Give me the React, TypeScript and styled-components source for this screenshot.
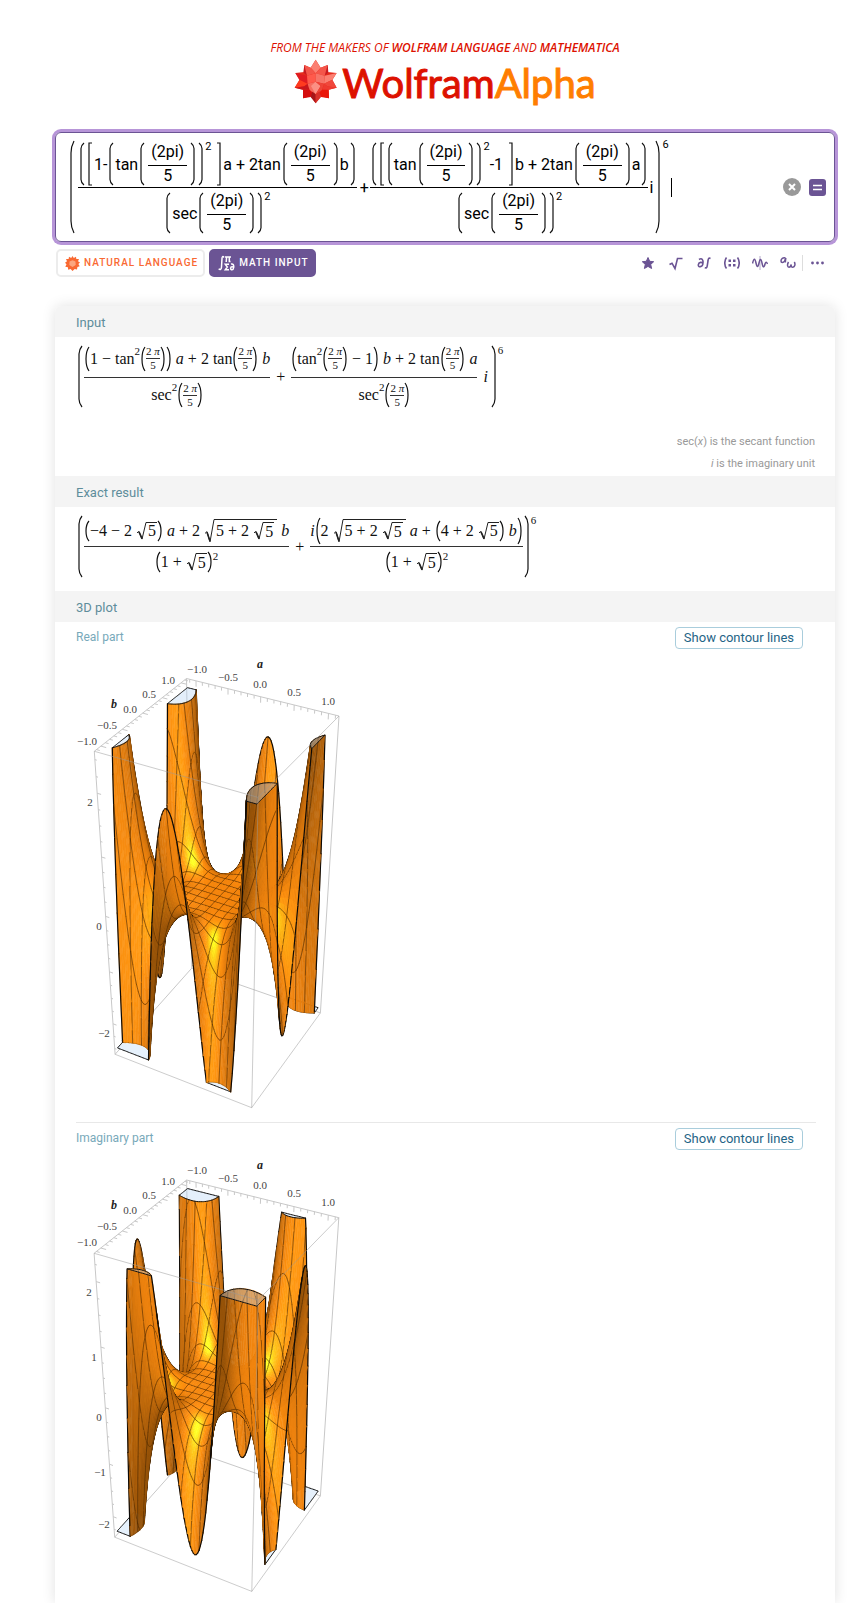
import React, { useMemo } from "react";
import styled, { createGlobalStyle } from "styled-components";

/* ------------------------------------------------------------------ */
/* Global                                                              */
/* ------------------------------------------------------------------ */

const GlobalStyle = createGlobalStyle`
  *, *::before, *::after { box-sizing: border-box; }
  body {
    margin: 0;
    background: #fff;
    font-family: Roboto, "Liberation Sans", sans-serif;
    color: #111;
  }
  button { font: inherit; }
`;

const Page = styled.main`
  padding: 40px 17px 0 55px;
`;

/* ------------------------------------------------------------------ */
/* Header                                                              */
/* ------------------------------------------------------------------ */

const Header = styled.header`
  display: flex;
  flex-direction: column;
  align-items: center;
`;

const Tagline = styled.a`
  font: italic 12px/16px "Open Sans", sans-serif;
  color: #dd1100;
  text-decoration: none;
  white-space: nowrap;
  b { font-weight: 600; }
`;

const Wordmark = styled.a`
  display: flex;
  align-items: center;
  gap: 4px;
  height: 52px;
  margin-top: 1px;
  font: 400 40px/52px Lato, sans-serif;
  -webkit-text-stroke: 1px currentColor;
  color: #dd1100;
  text-decoration: none;
  em { font-style: normal; color: #ff7e00; }
`;

const Spikey = () => (
  <svg width="44" height="48" viewBox="11 10 132 144" aria-hidden="true">
    <path
      fill="#e52a1c"
      d="M76 12 91 36 112 28 111 49 139 52 126 73 139 96 115 102 116 128 92 122 76 143 61 122 38 128 38 102 13 96 27 73 15 52 42 49 42 28 61 36Z"
    />
    <path fill="#fb8072" d="M76 12 91 36 76 53 61 36Z" />
    <path fill="#f4564a" d="M42 28 61 36 76 53 50 60 43 48Z" />
    <path fill="#f4564a" d="M112 28 91 36 76 53 103 60 111 48Z" />
    <path fill="#c81a20" d="M42 28 50 60 39 50Z M112 28 103 60 114 50Z" />
    <path fill="#ff3b1f" d="M13 96 28 72 52 84 42 92Z" />
    <path fill="#e01b22" d="M15 52 50 60 52 84 28 72Z" />
    <path fill="#fb8072" d="M139 52 103 60 101 84 126 72Z" />
    <path fill="#f0483c" d="M139 96 126 72 101 84 111 92Z" />
    <path fill="#c9161c" d="M13 96 42 92 52 84 57 102 38 102Z" />
    <path fill="#ee3a30" d="M139 96 111 92 101 84 96 102 115 102Z" />
    <path fill="#ff5a4c" d="M76 53 50 60 52 84 76 78Z" />
    <path fill="#f77468" d="M76 53 103 60 101 84 76 78Z" />
    <path fill="#f66b5e" d="M76 78 52 84 58 103 76 116Z" />
    <path fill="#fb9084" d="M76 78 62 91 76 116 91 91Z" />
    <path fill="#ee4438" d="M76 78 101 84 95 103 76 116 91 91Z" />
    <path fill="#d40e0e" d="M38 128 38 103 57 102 66 112 61 124Z" />
    <path fill="#ea1608" d="M116 128 115 103 96 102 87 112 92 124Z" />
    <path fill="#a61519" d="M76 143 61 124 66 108 76 116Z" />
    <path fill="#d8302a" d="M76 143 92 124 87 108 76 116Z" />
  </svg>
);

/* ------------------------------------------------------------------ */
/* Query field                                                         */
/* ------------------------------------------------------------------ */

const QueryBox = styled.form`
  display: flex;
  align-items: center;
  justify-content: space-between;
  height: 110px;
  margin-top: 23px;
  padding: 0 8px 0 12px;
  border: 1px solid #6b5494;
  border-radius: 6px;
  box-shadow: 0 0 0 3px #b795d8;
`;

const Editor = styled.div`
  display: flex;
  align-items: center;
  outline: none;
`;

const BoxActions = styled.div`
  display: flex;
  align-items: center;
  gap: 8px;
`;

const ClearButton = styled.button`
  display: grid;
  place-items: center;
  width: 18px;
  height: 18px;
  padding: 0;
  border: 0;
  border-radius: 50%;
  background: #999;
`;

const ComputeButton = styled(ClearButton)`
  width: 17px;
  height: 17px;
  border-radius: 3px;
  background: #6b5494;
`;

const Caret = styled.span`
  width: 1px;
  height: 19px;
  margin-left: 2px;
  background: #000;
`;

/* ------------------------------------------------------------------ */
/* Mode bar                                                            */
/* ------------------------------------------------------------------ */

const ModeBar = styled.div`
  display: flex;
  align-items: center;
  justify-content: space-between;
  margin: 7px 8px 0 1px;
`;

const Cluster = styled.div<{ $gap: number }>`
  display: flex;
  align-items: center;
  gap: ${(p) => p.$gap}px;
`;

const ModeButton = styled.button<{ $active?: boolean }>`
  display: flex;
  align-items: center;
  gap: 4px;
  height: 28px;
  padding: 0 5px 0 7px;
  border: 2px solid ${(p) => (p.$active ? "#6b5494" : "#ececec")};
  border-radius: 5px;
  background: ${(p) => (p.$active ? "#6b5494" : "#fff")};
  color: ${(p) => (p.$active ? "#fff" : "#f96932")};
  font-size: 10px;
  font-weight: 500;
  line-height: 16px;
  letter-spacing: 1px;
  white-space: nowrap;
`;

const ToolButton = styled.button`
  display: grid;
  place-items: center;
  width: 20px;
  height: 20px;
  padding: 0;
  border: 0;
  background: none;
  color: #6b5494;
`;

const ToolDivider = styled.span`
  width: 1px;
  height: 16px;
  background: #ddd;
`;

/* ------------------------------------------------------------------ */
/* Result card                                                         */
/* ------------------------------------------------------------------ */

const Card = styled.div`
  margin-top: 29px;
  border-radius: 6px 6px 0 0;
  background: #fff;
  box-shadow: 0 0 14px rgba(0, 0, 0, 0.12);
`;

const PodTitle = styled.h2`
  margin: 0;
  height: 31px;
  padding: 3px 21px 0;
  background: #f4f4f4;
  color: #5e8d9b;
  font-size: 13px;
  font-weight: 400;
  line-height: 28px;
`;

const Pod = styled.section`
  &:first-child ${PodTitle} { border-radius: 6px 6px 0 0; }
`;

const PodBody = styled.div<{ $height: number }>`
  display: flex;
  flex-direction: column;
  justify-content: space-between;
  min-height: ${(p) => p.$height}px;
  padding: 9px 20px 0 21px;
`;

const Notes = styled.div`
  color: #999;
  font-size: 11px;
  line-height: 22px;
  text-align: right;
  padding-bottom: 1px;
`;

const SubPod = styled.div<{ $height: number }>`
  min-height: ${(p) => p.$height}px;
  margin: 0 19px 0 21px;
  & + & { border-top: 1px solid #e8e8e8; }
`;

const SubHeader = styled.div`
  display: flex;
  align-items: flex-start;
  justify-content: space-between;
  padding: 5px 13px 0 0;
  h3 {
    margin: 0;
    color: #78a9ba;
    font-size: 12px;
    font-weight: 400;
    line-height: 20px;
  }
`;

const ContourButton = styled.button`
  height: 22px;
  padding: 0 8px;
  border: 1px solid #a9cddc;
  border-radius: 4px;
  background: #fff;
  color: #1f6486;
  font-size: 13px;
  line-height: 18px;
`;

/* ------------------------------------------------------------------ */
/* Typeset maths                                                       */
/* ------------------------------------------------------------------ */

const Row = styled.span<{ $h?: number; $gap?: number }>`
  display: flex;
  align-items: center;
  justify-content: center;
  gap: ${(p) => p.$gap ?? 0}px;
  height: ${(p) => (p.$h ? `${p.$h}px` : "auto")};
  white-space: pre;
`;

const Bracket = styled.span<{ $tight: boolean }>`
  display: flex;
  flex: none;
  align-self: stretch;
  width: 4px;
  margin: 0 ${(p) => (p.$tight ? 1 : 2)}px;
  svg { width: 100%; height: 0; min-height: 100%; overflow: visible; }
`;

const bracketShapes = {
  "(": "M4 0C2 4 1 7 1 13V87C1 93 2 96 4 100",
  ")": "M0 0C2 4 3 7 3 13V87C3 93 2 96 0 100",
  "[": "M4 0H1V100H4",
  "]": "M0 0H3V100H0",
};

const arcShapes = {
  "(": "M4 0C0 22 0 78 4 100",
  ")": "M0 0C4 22 4 78 0 100",
  "[": bracketShapes["["],
  "]": bracketShapes["]"],
};

const Br = ({ k, arc = false }: { k: keyof typeof bracketShapes; arc?: boolean }) => (
  <Bracket $tight={arc}>
    <svg viewBox="0 0 4 100" preserveAspectRatio="none" aria-hidden="true">
      <path
        d={(arc ? arcShapes : bracketShapes)[k]}
        fill="none"
        stroke="#111"
        strokeWidth="1.2"
        vectorEffect="non-scaling-stroke"
      />
    </svg>
  </Bracket>
);

const Sup = styled.sup`
  align-self: flex-start;
  font-size: 11px;
  line-height: 8px;
`;

const SansMath = styled.span`
  display: flex;
  align-items: center;
  font: 400 16px/19px Roboto, sans-serif;
  color: #000;
`;

const SansFraction = styled.span<{ $pad: number }>`
  display: flex;
  flex-direction: column;
  margin: 0 ${(p) => p.$pad}px;
  text-align: center;
  & > :last-child { border-top: 1px solid #000; }
`;

const SansNumerator = styled.span`
  padding: 1px 3px 4px;
  line-height: 18px;
`;

const SansDenominator = styled.span`
  padding: 1px 0 2px;
  line-height: 18px;
`;

const Lower = styled.span`
  display: flex;
  justify-content: center;
  padding-top: 5px;
`;

const ThinSpace = styled.span`
  width: 4px;
`;

const Plus = styled.span`
  padding: 0 1px;
`;

const TwoPiFifths = () => (
  <>
    <Br k="(" />
    <SansFraction $pad={2}>
      <SansNumerator>(2pi)</SansNumerator>
      <SansDenominator>5</SansDenominator>
    </SansFraction>
    <Br k=")" />
  </>
);

const SecSquared = () => (
  <Lower>
    <Row $h={40}>
      <Br k="(" />
      sec
      <TwoPiFifths />
      <Br k=")" />
      <Sup>2</Sup>
    </Row>
  </Lower>
);

const TypedQuery = () => (
  <SansMath>
    <Row>
      <Br k="(" />
      <SansFraction $pad={2}>
        <Row $h={46}>
          <Row $h={42}>
            <Br k="(" />
            <Br k="[" />
            1-
            <Br k="(" />
            tan
            <TwoPiFifths />
            <Br k=")" />
            <Sup>2</Sup>
            <ThinSpace />
            <Br k="]" />
            a + 2tan
            <TwoPiFifths />b
            <Br k=")" />
          </Row>
        </Row>
        <SecSquared />
      </SansFraction>
      <Plus>+</Plus>
      <SansFraction $pad={0}>
        <Row $h={46}>
          <Row $h={42}>
            <Br k="(" />
            <Br k="[" />
            <Br k="(" />
            tan
            <TwoPiFifths />
            <Br k=")" />
            <Sup>2</Sup>
            -1
            <ThinSpace />
            <Br k="]" />
            b + 2tan
            <TwoPiFifths />a
            <Br k=")" />
          </Row>
        </Row>
        <SecSquared />
      </SansFraction>
      <Plus>i</Plus>
      <Br k=")" />
      <Sup>6</Sup>
    </Row>
    <Caret />
  </SansMath>
);

const SerifMath = styled.span`
  display: flex;
  align-items: center;
  font: 400 16px/18px "Liberation Serif", serif;
  color: #111;
  i { font-style: italic; }
`;

const SerifFraction = styled.span`
  display: flex;
  flex-direction: column;
  text-align: center;
  & > :last-child { border-top: 1px solid #333; }
`;

const SmallFraction = styled.span`
  display: flex;
  flex-direction: column;
  text-align: center;
  font-size: 11px;
  line-height: 13px;
  & > :last-child { border-top: 1px solid #333; }
`;

const Operator = styled.span`
  padding: 0 6px;
`;

const ImaginaryUnit = styled.i`
  padding: 0 2px 0 6px;
`;

const Surd = styled.span<{ $h: number }>`
  display: flex;
  height: ${(p) => p.$h}px;
  & > svg { width: 10px; height: 100%; overflow: visible; }
`;

const Radicand = styled.span<{ $pad: number }>`
  display: flex;
  align-items: center;
  gap: 4px;
  padding: 0 ${(p) => p.$pad}px 0 2px;
  border-top: 1px solid #222;
`;

const Root = ({ h, pad = 1, children }: { h: number; pad?: number; children: React.ReactNode }) => (
  <Surd $h={h}>
    <svg viewBox="0 0 10 20" preserveAspectRatio="none" aria-hidden="true">
      <path d="M1 12 3 10.500 6 19 10 0.500" fill="none" stroke="#222" strokeWidth="1" vectorEffect="non-scaling-stroke" />
      <path d="M3 11 6 18.500" stroke="#222" strokeWidth="1.600" vectorEffect="non-scaling-stroke" />
    </svg>
    <Radicand $pad={pad}>{children}</Radicand>
  </Surd>
);

const SerifTwoPiFifths = () => (
  <Row $h={24}>
    <Br arc k="(" />
    <SmallFraction>
      <span>
        2 <i>π</i>
      </span>
      <span>5</span>
    </SmallFraction>
    <Br arc k=")" />
  </Row>
);

const TrigSquared = ({ name }: { name: string }) => (
  <Row $h={24}>
    {name}
    <Sup>2</Sup>
    <SerifTwoPiFifths />
  </Row>
);

const InputFormula = () => (
  <SerifMath>
    <Row $h={61}>
      <Br k="(" />
      <SerifFraction>
        <Row $h={36}>
          <Row $h={24} $gap={4}>
            <Row $h={24}>
              <Br arc k="(" />1
            </Row>
            −
            <Row $h={24}>
              <TrigSquared name="tan" />
              <Br arc k=")" />
            </Row>
            <i>a</i>+<span>2</span>
            <Row $h={24}>
              tan
              <SerifTwoPiFifths />
            </Row>
            <i>b</i>
          </Row>
        </Row>
        <Row $h={36}>
          <TrigSquared name="sec" />
        </Row>
      </SerifFraction>
      <Operator>+</Operator>
      <SerifFraction>
        <Row $h={36}>
          <Row $h={24} $gap={4}>
            <Row $h={24}>
              <Br arc k="(" />
              <TrigSquared name="tan" />
            </Row>
            −
            <Row $h={24}>
              1<Br arc k=")" />
            </Row>
            <i>b</i>+<span>2</span>
            <Row $h={24}>
              tan
              <SerifTwoPiFifths />
            </Row>
            <i>a</i>
          </Row>
        </Row>
        <Row $h={36}>
          <TrigSquared name="sec" />
        </Row>
      </SerifFraction>
      <ImaginaryUnit>i</ImaginaryUnit>
      <Br k=")" />
      <Sup>6</Sup>
    </Row>
  </SerifMath>
);

const OnePlusRootFive = () => (
  <Row $h={32}>
    <Row $h={20} $gap={4}>
      <Row $h={20}>
        <Br arc k="(" />1
      </Row>
      +
      <Row $h={20}>
        <Root h={18}>5</Root>
        <Br arc k=")" />
        <Sup>2</Sup>
      </Row>
    </Row>
  </Row>
);

const RootOfRoot = () => (
  <Root h={24} pad={3}>
    5 + 2
    <Root h={18}>5</Root>
  </Root>
);

const ExactFormula = () => (
  <SerifMath>
    <Row $h={61}>
      <Br k="(" />
      <SerifFraction>
        <Row $h={30} $gap={4}>
          <Row $h={20} $gap={4}>
            <Row $h={20}>
              <Br arc k="(" />
              −4
            </Row>
            −<span>2</span>
            <Row $h={20}>
              <Root h={18}>5</Root>
              <Br arc k=")" />
            </Row>
          </Row>
          <i>a</i>+<span>2</span>
          <RootOfRoot />
          <i>b</i>
        </Row>
        <OnePlusRootFive />
      </SerifFraction>
      <Operator>+</Operator>
      <SerifFraction>
        <Row $h={30}>
          <i>i</i>
          <Row $h={26}>
            <Br arc k="(" />
            <Row $gap={4}>
              2
              <RootOfRoot />
              <i>a</i>+
              <Row $h={20} $gap={4}>
                <Row $h={20}>
                  <Br arc k="(" />4
                </Row>
                +<span>2</span>
                <Row $h={20}>
                  <Root h={18}>5</Root>
                  <Br arc k=")" />
                </Row>
              </Row>
              <i>b</i>
            </Row>
            <Br arc k=")" />
          </Row>
        </Row>
        <OnePlusRootFive />
      </SerifFraction>
      <Br k=")" />
      <Sup>6</Sup>
    </Row>
  </SerifMath>
);

/* ------------------------------------------------------------------ */
/* Surface plots                                                       */
/* ------------------------------------------------------------------ */

type P2 = [number, number];
type P3 = [number, number, number];

interface PlotSpec {
  label: string;
  height: number;
  imaginary: boolean;
  zBox: number;
  zClip: number;
  /* screen corners: (-,+) (+,+) (-,-) (+,-), top face then bottom face */
  corners: P2[];
  zTicks: { text: string; x: number; y: number }[];
}

const BOX = 1.15;
const DOMAIN = 1.12;
const CELLS = 96;
const MESH = 6;
const PHASE = (4 * Math.PI) / 5;

/* Projective map from box coordinates to the screen, solved from the corners. */
function solveCamera(corners: P2[]) {
  const xyz: P3[] = [
    [-1, 1, 1], [1, 1, 1], [-1, -1, 1], [1, -1, 1],
    [-1, 1, -1], [1, 1, -1], [-1, -1, -1], [1, -1, -1],
  ];
  const n = 11;
  const m = Array.from({ length: n }, () => new Array(n + 1).fill(0));
  xyz.forEach(([x, y, z], k) => {
    const [u, v] = corners[k].map((c) => c / 200);
    const rows = [
      [x, y, z, 1, 0, 0, 0, 0, -u * x, -u * y, -u * z, u],
      [0, 0, 0, 0, x, y, z, 1, -v * x, -v * y, -v * z, v],
    ];
    rows.forEach((r) => {
      for (let i = 0; i < n; i++) for (let j = 0; j <= n; j++) m[i][j] += r[i] * r[j];
    });
  });
  for (let c = 0; c < n; c++) {
    let p = c;
    for (let r = c + 1; r < n; r++) if (Math.abs(m[r][c]) > Math.abs(m[p][c])) p = r;
    [m[c], m[p]] = [m[p], m[c]];
    for (let r = 0; r < n; r++) {
      if (r === c) continue;
      const f = m[r][c] / m[c][c];
      for (let j = c; j <= n; j++) m[r][j] -= f * m[c][j];
    }
  }
  const s = m.map((r, i) => r[n] / r[i]);
  return (x: number, y: number, z: number): P2 => {
    const w = s[8] * x + s[9] * y + s[10] * z + 1;
    return [
      (200 * (s[0] * x + s[1] * y + s[2] * z + s[3])) / w,
      (200 * (s[4] * x + s[5] * y + s[6] * z + s[7])) / w,
    ];
  };
}

const unit = (v: P3): P3 => {
  const l = Math.hypot(...v);
  return [v[0] / l, v[1] / l, v[2] / l];
};
const dot = (a: P3, b: P3) => a[0] * b[0] + a[1] * b[1] + a[2] * b[2];

const VIEW = unit([1.3, -2.4, 1.6]);
const KEY_LIGHT = unit([0.8, -1.5, 1.7]);
const FILL_LIGHT = unit([-0.4, -1.8, 0.6]);
const HALF = unit([VIEW[0] + KEY_LIGHT[0], VIEW[1] + KEY_LIGHT[1], VIEW[2] + KEY_LIGHT[2]]);

function shade(fx: number, fy: number) {
  const k = 0.85;
  let n = unit([-fx * k, -fy * k, 1]);
  const under = dot(n, VIEW) < 0;
  if (under) n = [-n[0], -n[1], -n[2]];
  const d = Math.max(0, dot(n, under ? FILL_LIGHT : KEY_LIGHT));
  const s = under ? 0 : Math.pow(Math.max(0, dot(n, HALF)), 12);
  const i = 0.57 + (under ? 0.38 : 0.52) * d;
  const c = [
    Math.min(255, 262 * i + 30 * s),
    Math.min(255, 144 * i + 110 * s),
    Math.min(255, 16 * i + 20 * s),
  ];
  return `rgb(${c.map(Math.round).join(",")})`;
}

/* Keep the part of a polygon on one side of a z plane. */
function clipPoly(poly: P3[], z: number, below: boolean): P3[] {
  const inside = (p: P3) => (below ? p[2] <= z : p[2] >= z);
  const out: P3[] = [];
  poly.forEach((a, i) => {
    const b = poly[(i + 1) % poly.length];
    if (inside(a)) out.push(a);
    if (inside(a) !== inside(b)) {
      const t = (z - a[2]) / (b[2] - a[2]);
      out.push([a[0] + t * (b[0] - a[0]), a[1] + t * (b[1] - a[1]), z]);
    }
  });
  return out;
}

function clipSegment(a: P3, b: P3, zc: number): P3[] {
  const cut = (p: P3, q: P3): P3 => {
    if (Math.abs(p[2]) <= zc) return p;
    const z = p[2] > 0 ? zc : -zc;
    const t = (z - p[2]) / (q[2] - p[2]);
    return [p[0] + t * (q[0] - p[0]), p[1] + t * (q[1] - p[1]), z];
  };
  if ((a[2] > zc && b[2] > zc) || (a[2] < -zc && b[2] < -zc)) return [];
  return [cut(a, b), cut(b, a)];
}

interface Stroke {
  d: string;
  fill?: string;
  edge?: boolean;
}

function buildSurface(spec: PlotSpec) {
  const camera = solveCamera(spec.corners);
  const project = ([x, y, z]: P3) => camera(x / BOX, y / BOX, z / spec.zBox);
  const path = (pts: P3[], close = false) =>
    "M" +
    pts.map((p) => project(p).map((c) => c.toFixed(1)).join(" ")).join("L") +
    (close ? "Z" : "");

  const f = (a: number, b: number) => {
    const r6 = Math.pow(a * a + b * b, 3);
    const ang = PHASE - 6 * Math.atan2(b, a);
    return r6 * (spec.imaginary ? Math.sin(ang) : Math.cos(ang));
  };
  const e = 1e-4;
  const grad = (a: number, b: number): P2 => [
    (f(a + e, b) - f(a - e, b)) / (2 * e),
    (f(a, b + e) - f(a, b - e)) / (2 * e),
  ];
  const at = (i: number) => DOMAIN * (-1 + (2 * i) / CELLS);
  const vertex = (i: number, j: number): P3 => [at(i), at(j), f(at(i), at(j))];
  const zc = spec.zClip;

  const facing = (i: number, j: number) => {
    const [gx, gy] = grad((at(i) + at(i + 1)) / 2, (at(j) + at(j + 1)) / 2);
    const c: P3 = [(at(i) + at(i + 1)) / 2, (at(j) + at(j + 1)) / 2, 0];
    c[2] = Math.max(-zc, Math.min(zc, f(c[0], c[1])));
    const h = 1e-3;
    const o = project(c);
    const u = project([c[0] + h, c[1], c[2] + gx * h]);
    const v = project([c[0], c[1] + h, c[2] + gy * h]);
    return (u[0] - o[0]) * (v[1] - o[1]) - (u[1] - o[1]) * (v[0] - o[0]) < 0;
  };

  const strokes: Stroke[] = [];
  const caps = { top: "", bottom: "", topLine: "", bottomLine: "" };

  const line = (a: P3, b: P3, edge: boolean) => {
    const seg = clipSegment(a, b, zc);
    if (seg.length) strokes.push({ d: path(seg), edge });
  };
  const onRim = (v: number) => Math.abs(Math.abs(v) - DOMAIN) < 1e-9;

  for (let j = CELLS - 1; j >= 0; j--) {
    for (let i = 0; i < CELLS; i++) {
      const quad = [vertex(i, j), vertex(i + 1, j), vertex(i + 1, j + 1), vertex(i, j + 1)];
      const poly = clipPoly(clipPoly(quad, zc, true), -zc, false);
      if (poly.length > 2) {
        const [gx, gy] = grad((at(i) + at(i + 1)) / 2, (at(j) + at(j + 1)) / 2);
        strokes.push({ d: path(poly, true), fill: shade(gx, gy) });
      }
      ([[zc, "top"], [-zc, "bottom"]] as const).forEach(([z, side]) => {
        const over = clipPoly(quad, z, side === "bottom");
        if (over.length < 3) return;
        const flat = over.map(([x, y]): P3 => [x, y, z]);
        caps[side] += path(flat, true);
        over.forEach((p, k) => {
          const q = over[(k + 1) % over.length];
          const contour = Math.abs(p[2] - z) < 1e-9 && Math.abs(q[2] - z) < 1e-9;
          const rim = (p[0] === q[0] && onRim(p[0])) || (p[1] === q[1] && onRim(p[1]));
          if (contour || rim) {
            caps[side === "top" ? "topLine" : "bottomLine"] += path([flat[k], flat[(k + 1) % flat.length]]);
          }
        });
      });
      const here = facing(i, j);
      const foldLeft = i > 0 && facing(i - 1, j) !== here;
      const foldBack = j < CELLS - 1 && facing(i, j + 1) !== here;
      if (i === 0 || foldLeft || i % MESH === 0) line(quad[0], quad[3], i === 0 || foldLeft);
      if (j === CELLS - 1 || foldBack || (j + 1) % MESH === 0)
        line(quad[3], quad[2], j === CELLS - 1 || foldBack);
      if (i === CELLS - 1) line(quad[1], quad[2], true);
      if (j === 0) line(quad[0], quad[1], true);
    }
  }

  const B = BOX;
  const Z = spec.zBox;
  const back = [
    path([[-B, B, Z], [B, B, Z]]),
    path([[-B, B, Z], [-B, -B, Z]]),
    path([[-B, B, Z], [-B, B, -Z]]),
    path([[-B, B, -Z], [B, B, -Z]]),
    path([[-B, B, -Z], [-B, -B, -Z]]),
    path([[B, B, Z], [B, B, -Z]]),
    path([[-B, -B, Z], [-B, -B, -Z]]),
  ];
  const front = [
    path([[-B, -B, Z], [B, -B, Z]]),
    path([[B, B, Z], [B, -B, Z]]),
    path([[B, -B, Z], [B, -B, -Z]]),
    path([[-B, -B, -Z], [B, -B, -Z]]),
    path([[B, B, -Z], [B, -B, -Z]]),
  ];
  for (let k = -11; k <= 11; k++) {
    const t = k / 10;
    const major = k % 5 === 0;
    back.push(path([[t, B, Z], [t, B, Z * (major ? 0.966 : 0.98)]]));
    back.push(path([[-B, t, Z], [-B + (major ? 0.08 : 0.05), t, Z]]));
  }
  for (let k = -Math.floor(Z * 4); k <= Z * 4; k++) {
    const t = k / 4;
    back.push(path([[-B, -B, t], [-B + (k % 4 === 0 ? 0.06 : 0.03), -B, t]]));
  }
  return { strokes, caps, back: back.join(""), front: front.join("") };
}

const PlotSvg = styled.svg`
  display: block;
  overflow: visible;
`;

const TickText = styled.text`
  font: 11px "Liberation Serif", serif;
  fill: #444;
  text-anchor: middle;
  dominant-baseline: central;
`;

const AxisName = styled(TickText)`
  font: italic bold 12px "Liberation Serif", serif;
  fill: #222;
`;

const topTicks = [
  { text: "−1.0", x: 121, y: 20 },
  { text: "−0.5", x: 152, y: 28 },
  { text: "0.0", x: 184, y: 35 },
  { text: "0.5", x: 218, y: 43 },
  { text: "1.0", x: 252, y: 52 },
  { text: "1.0", x: 92, y: 31 },
  { text: "0.5", x: 73, y: 45 },
  { text: "0.0", x: 54, y: 60 },
  { text: "−0.5", x: 31, y: 76 },
  { text: "−1.0", x: 11, y: 92 },
];

const SurfacePlot = ({ spec }: { spec: PlotSpec }) => {
  const { strokes, caps, back, front } = useMemo(() => buildSurface(spec), [spec]);
  return (
    <PlotSvg
      width="290"
      height={spec.height}
      viewBox={`0 0 290 ${spec.height}`}
      role="img"
      aria-label={`3D plot, ${spec.label}`}
    >
      <path d={back} fill="none" stroke="#c8c8c8" strokeWidth="1" />
      <path d={caps.bottom} fill="#e6f1fc" />
      <path d={caps.bottomLine} fill="none" stroke="#111" strokeWidth="1" />
      <g strokeLinecap="round" strokeLinejoin="round">
        {strokes.map((s, i) =>
          s.fill ? (
            <path key={i} d={s.d} fill={s.fill} stroke={s.fill} strokeWidth="0.5" />
          ) : (
            <path
              key={i}
              d={s.d}
              fill="none"
              stroke={s.edge ? "#0c0a08" : "#4a2600"}
              strokeOpacity={s.edge ? 1 : 0.75}
              strokeWidth={s.edge ? 1.2 : 0.8}
            />
          )
        )}
      </g>
      <path d={caps.top} fill="#b4d2f5" fillOpacity="0.36" />
      <path d={caps.topLine} fill="none" stroke="#111" strokeWidth="1" />
      <path d={front} fill="none" stroke="#999" strokeOpacity="0.5" strokeWidth="1" />
      {topTicks.concat(spec.zTicks).map((t, i) => (
        <TickText key={i} x={t.x} y={t.y}>
          {t.text}
        </TickText>
      ))}
      <AxisName x="184" y="15">a</AxisName>
      <AxisName x="38" y="55">b</AxisName>
    </PlotSvg>
  );
};

const plots: PlotSpec[] = [
  {
    label: "Real part",
    height: 470,
    imaginary: false,
    zBox: 2.62,
    zClip: 2.5,
    corners: [
      [110.7, 29.3], [263.3, 67.3], [18.3, 102.7], [181.5, 148],
      [115.7, 319], [244, 364], [39, 405.3], [176.3, 458.7],
    ],
    zTicks: [
      { text: "2", x: 14, y: 153 },
      { text: "0", x: 23, y: 277 },
      { text: "−2", x: 28, y: 384 },
    ],
  },
  {
    label: "Imaginary part",
    height: 453,
    imaginary: true,
    zBox: 2.41,
    zClip: 2.3,
    corners: [
      [110.7, 30], [263.3, 67.7], [18.3, 103.3], [181.3, 150],
      [115.7, 300.7], [244, 346], [38.5, 387.3], [176.5, 441.3],
    ],
    zTicks: [
      { text: "2", x: 13, y: 142 },
      { text: "1", x: 18, y: 207 },
      { text: "0", x: 23, y: 267 },
      { text: "−1", x: 24, y: 322 },
      { text: "−2", x: 28, y: 374 },
    ],
  },
];

/* ------------------------------------------------------------------ */
/* Small icons                                                         */
/* ------------------------------------------------------------------ */

const SunIcon = () => (
  <svg width="15" height="15" viewBox="0 0 15 15" aria-hidden="true">
    <path
      fill="#f96932"
      d="M7.500 0 8.800 2 11 .7 11.300 3 14 3 13 5.200 15 6.500 13.400 8 14.700 10.300 12.400 11 12 13.600 9.700 12.900 7.500 15 5.600 13 3.200 13.800 2.900 11.300.3 10.700 1.500 8.300 0 6.700 2 5.200 1 3 3.600 3 4 .7 6.200 2Z"
    />
    <path fill="#fba67f" d="M4.500 5.500 7.500 4.200 10.500 5.500 10.700 9 7.500 11 4.300 9Z" />
  </svg>
);

const MathIcon = () => (
  <svg width="17" height="16" viewBox="0 0 17 16" fill="none" stroke="#fff" strokeWidth="1.500" aria-hidden="true">
    <path d="M6 2.500C5 1 4 1.500 4 3.500L3.500 12C3.500 14.500 2 15 .7 13.800" />
    <path d="M7 2H13M8.600 2 8.200 7M11.300 2V6.500H12.500" />
    <path d="M11 9.300H7.300L9.300 12 7.300 14.700H11" />
    <path d="M13 9C15.500 8.500 16 10.500 15.700 12.500 15.400 15.500 12.500 15.300 12.600 13.200 12.800 11.200 15 11.300 15.700 12.700" />
  </svg>
);

const tools = [
  {
    label: "Favorites",
    icon: <path fill="currentColor" strokeWidth="1" d="M8 2.500 9.700 6.300 13.700 6.700 10.700 9.400 11.600 13.500 8 11.400 4.400 13.500 5.300 9.400 2.300 6.700 6.300 6.300Z" />,
  },
  {
    label: "Roots",
    icon: <path d="M1.500 9.500 4 8.200 7 13.500 9.500 3.500H14.500" />,
  },
  {
    label: "Calculus",
    icon: (
      <>
        <path d="M3 4.500C6 2.500 7.500 5 7 8.500 6.500 12.500 2 12.500 2.300 9.800 2.600 7 6.500 6.500 7 9" />
        <path d="M14.500 3.500C12.500 2.500 12.200 4 12 6L11.200 11C11 12.800 10 13.300 8.800 12.600" />
      </>
    ),
  },
  {
    label: "Matrices",
    icon: (
      <>
        <path d="M2.500 2.500C.2 5.500.2 10.500 2.500 13.500M13.500 2.500C15.800 5.500 15.800 10.500 13.500 13.500" />
        <path fill="currentColor" stroke="none" d="M4.500 4.500H7V7H4.500ZM9 4.500H11.500V7H9ZM4.500 9H7V11.500H4.500ZM9 9H11.500V11.500H9Z" />
      </>
    ),
  },
  {
    label: "Waves",
    icon: (
      <>
        <path strokeWidth="1.500" d="M.5 8.500C2 2.500 3 3.500 4 8 5 12.500 6 12.500 7 8 8 3.500 9 3 10 8 11 13 12 13 13 9 13.600 7 14.500 6.500 15.500 9" />
        <path strokeWidth="1" strokeOpacity=".5" d="M8 1V15" />
      </>
    ),
  },
  {
    label: "Greek letters",
    icon: (
      <path
        strokeWidth="1.500"
        d="M5.500 3C3 2.200 1 4 1 6 1 8 3.500 8 4.500 6L5.800 3 5.300 7.500M8.500 7C7 9.500 7.300 12.200 9 12.200 10.500 12.200 11 10.500 11.200 9.500 11 11.500 11.500 12.200 12.800 12.200 15 12 15.500 9 14.300 7"
      />
    ),
  },
];

/* ------------------------------------------------------------------ */
/* App                                                                 */
/* ------------------------------------------------------------------ */

export default function App() {
  return (
    <>
      <GlobalStyle />
      <Page>
        <Header>
          <Tagline href="#makers">
            FROM THE MAKERS OF <b>WOLFRAM LANGUAGE</b> AND <b>MATHEMATICA</b>
          </Tagline>
          <Wordmark href="#home">
            <Spikey />
            <span>
              Wolfram<em>Alpha</em>
            </span>
          </Wordmark>
        </Header>

        <QueryBox onSubmit={(e) => e.preventDefault()}>
          <Editor role="textbox" aria-label="Math input" tabIndex={0}>
            <TypedQuery />
          </Editor>
          <BoxActions>
            <ClearButton type="button" aria-label="Clear">
              <svg width="8" height="8" viewBox="0 0 8 8" stroke="#fff" strokeWidth="2">
                <path d="M1 1 7 7M7 1 1 7" />
              </svg>
            </ClearButton>
            <ComputeButton type="submit" aria-label="Compute">
              <svg width="9" height="7" viewBox="0 0 9 7" stroke="#fff" strokeWidth="1.500">
                <path d="M0 1.500H9M0 5.500H9" />
              </svg>
            </ComputeButton>
          </BoxActions>
        </QueryBox>

        <ModeBar>
          <Cluster $gap={4}>
            <ModeButton type="button">
              <SunIcon />
              NATURAL LANGUAGE
            </ModeButton>
            <ModeButton type="button" $active>
              <MathIcon />
              MATH INPUT
            </ModeButton>
          </Cluster>
          <Cluster $gap={4}>
            <Cluster $gap={8}>
              {tools.map((t) => (
                <ToolButton key={t.label} type="button" aria-label={t.label}>
                  <svg width="16" height="16" viewBox="0 0 16 16" fill="none" stroke="currentColor" strokeWidth="1.600">
                    {t.icon}
                  </svg>
                </ToolButton>
              ))}
            </Cluster>
            <ToolDivider />
            <ToolButton type="button" aria-label="More">
              <svg width="13" height="4" viewBox="0 0 13 4" fill="currentColor">
                <circle cx="1.500" cy="2" r="1.400" />
                <circle cx="6.500" cy="2" r="1.400" />
                <circle cx="11.500" cy="2" r="1.400" />
              </svg>
            </ToolButton>
          </Cluster>
        </ModeBar>

        <Card>
          <Pod>
            <PodTitle>Input</PodTitle>
            <PodBody $height={139}>
              <InputFormula />
              <Notes>
                <div>
                  sec(<i>x</i>) is the secant function
                </div>
                <div>
                  <i>i</i> is the imaginary unit
                </div>
              </Notes>
            </PodBody>
          </Pod>
          <Pod>
            <PodTitle>Exact result</PodTitle>
            <PodBody $height={84}>
              <ExactFormula />
            </PodBody>
          </Pod>
          <Pod>
            <PodTitle>3D plot</PodTitle>
            {plots.map((spec) => (
              <SubPod key={spec.label} $height={spec.imaginary ? 481 : 500}>
                <SubHeader>
                  <h3>{spec.label}</h3>
                  <ContourButton type="button">Show contour lines</ContourButton>
                </SubHeader>
                <SurfacePlot spec={spec} />
              </SubPod>
            ))}
          </Pod>
        </Card>
      </Page>
    </>
  );
}
